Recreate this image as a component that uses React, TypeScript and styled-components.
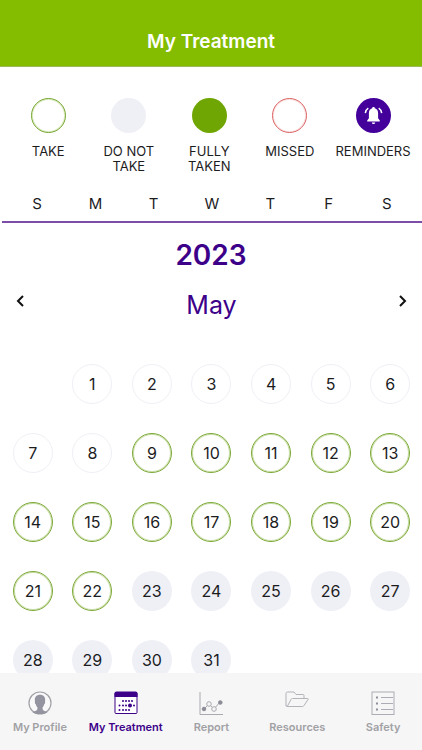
import React from "react";
import styled, { createGlobalStyle, css } from "styled-components";

const purple = "#3c0089";
const green = "#84bd00";
const mist = "#eff0f6";

const GlobalStyle = createGlobalStyle`
  * { box-sizing: border-box; }
  body { margin: 0; background: #fff; }
  button { font: inherit; color: inherit; background: none; border: 0; padding: 0; cursor: pointer; }
`;

const Screen = styled.div`
  display: flex;
  flex-direction: column;
  height: 100vh;
  overflow: hidden;
  background: #fff;
  color: #1c1c1e;
  font-family: Inter, "Liberation Sans", sans-serif;
`;

const Header = styled.header`
  flex: none;
  padding: 30px 16px 13px;
  background: ${green};
  border-bottom: 1px solid #9cb95c;
  text-align: center;
`;

const Title = styled.h1`
  margin: 0;
  color: #fff;
  font-size: 19px;
  font-weight: 600;
  line-height: 23px;
`;

const Content = styled.main`
  flex: 1;
  min-height: 0;
  overflow-y: auto;
  scrollbar-width: none;
`;

const Legend = styled.ul`
  display: grid;
  grid-template-columns: repeat(4, 15fr) 16fr;
  margin: 0;
  padding: 31px 6px 0 8px;
  list-style: none;
`;

const LegendItem = styled.li`
  display: flex;
  flex-direction: column;
  align-items: center;
  gap: 11px;
  height: 93px;
  font-size: 13px;
  line-height: 15px;
  text-align: center;
`;

type SwatchKind = "take" | "skip" | "taken" | "missed" | "reminder";

const swatchStyles = {
  take: css`border: 1px solid #74a52c; box-shadow: inset 0 0 0 1px #dcebc2;`,
  skip: css`background: ${mist};`,
  taken: css`background: #70a603;`,
  missed: css`border: 1px solid #dc6263; box-shadow: inset 0 0 0 1px #fae3e3;`,
  reminder: css`background: #43009a;`,
};

const Swatch = styled.span<{ $kind: SwatchKind }>`
  display: grid;
  place-items: center;
  width: 35px;
  height: 35px;
  border-radius: 50%;
  ${({ $kind }) => swatchStyles[$kind]}
`;

const LegendLabel = styled.span`
  max-width: 80px;
  white-space: pre-line;
`;

const Weekdays = styled.div`
  display: grid;
  grid-template-columns: repeat(7, 1fr);
  margin-left: 2px;
  padding: 3px 6px 7px;
  border-bottom: 2px solid #7c4ea8;
  font-size: 15px;
  line-height: 20px;
  text-align: center;
`;

const Year = styled.h2`
  margin: 0;
  padding-top: 15px;
  color: ${purple};
  font-size: 28px;
  font-weight: 600;
  line-height: 34px;
  text-align: center;
`;

const MonthBar = styled.div`
  display: flex;
  align-items: center;
  justify-content: space-between;
  padding: 16px 5px 0 6px;
`;

const Month = styled.h3`
  margin: 0;
  color: ${purple};
  font-size: 25px;
  font-weight: 400;
  line-height: 34px;
`;

const ArrowButton = styled.button`
  display: grid;
  place-items: center;
  width: 28px;
  height: 26px;
  margin-bottom: 8px;
`;

const Days = styled.div`
  display: grid;
  grid-template-columns: repeat(7, 1fr);
  row-gap: 29px;
  justify-items: center;
  padding: 42px 2px 16px 3px;
`;

type DayKind = "plain" | "take" | "skip";

const dayStyles = {
  plain: css`border: 1px solid ${mist};`,
  take: css`border: 1px solid #7ba836; box-shadow: inset 0 0 0 1px #c9dda5;`,
  skip: css`background: ${mist};`,
};

const Day = styled.button<{ $kind: DayKind; $first: boolean }>`
  && {
    width: 40px;
    height: 40px;
    border-radius: 50%;
    font-size: 16px;
    font-weight: 400;
    line-height: 20px;
    ${({ $first }) => $first && css`grid-column-start: 2;`}
    ${({ $kind }) => dayStyles[$kind]}
  }
`;

const TabBar = styled.nav`
  flex: none;
  display: grid;
  grid-template-columns: repeat(5, 1fr);
  margin: 0 -4px 0 -3px;
  padding: 17px 0 15px;
  background: #f6f6f7;
`;

const Tab = styled.a<{ $active?: boolean }>`
  display: flex;
  flex-direction: column;
  align-items: center;
  gap: 3px;
  color: ${({ $active }) => ($active ? purple : "#a1a1a4")};
  font-size: 11px;
  font-weight: 600;
  line-height: 16px;
  text-decoration: none;
  white-space: nowrap;
`;

const Icon = styled.svg`
  display: block;
  width: 26px;
  height: 26px;
`;

const BellIcon = () => (
  <svg width="21" height="21" viewBox="0 0 21 21" fill="#fff" aria-hidden="true">
    <path d="M10.5 2c-.8 0-1.300.5-1.300 1.200C6.900 3.800 5.900 5.700 5.900 8v5.300L4.200 15.600v.8h12.600v-.8l-1.700-2.300V8c0-2.300-1-4.200-3.300-4.800C11.800 2.500 11.300 2 10.500 2z" />
    <path d="M8.800 17.400h3.400c0 .9-.7 1.500-1.700 1.500s-1.700-.6-1.700-1.500z" />
    <path d="M5.300 3.200C3.500 4.300 2.600 6 2.300 8.200M15.700 3.200c1.800 1.100 2.700 2.800 3 5" fill="none" stroke="#fff" strokeWidth="1.500" />
  </svg>
);

const ProfileIcon = () => (
  <Icon viewBox="0 0 26 26" aria-hidden="true">
    <circle cx="13" cy="13" r="11" fill="#f9f9fa" stroke="#a0a0a7" strokeWidth="1.200" />
    <path d="M13 4.800c-3.300 0-5.400 2.200-5.200 5.400l.2 1.500c-.4.800.1 2.100.8 2.500.3 1.400.9 2.300 1.600 3v2c-.6 1.500-2.800 2-4.900 3A11 11 0 0 0 13 24a11 11 0 0 0 7.500-1.800c-2.100-1-4.300-1.500-4.900-3v-2c.7-.7 1.300-1.600 1.600-3 .7-.4 1.200-1.700.8-2.500l.2-1.500c.2-3.200-1.900-5.400-5.200-5.400z" fill="#93949f" />
  </Icon>
);

const calendarDots = [
  [10, 11], [13, 11], [16, 11], [19, 11],
  [6.5, 15.5], [10, 15.5], [13, 15.5], [21, 15.5],
  [6.5, 20], [10, 20], [13, 20], [16, 20],
];

const CalendarIcon = () => (
  <Icon viewBox="0 0 26 26" fill={purple} aria-hidden="true">
    <rect x="2" y="2.500" width="22" height="21" rx="1" fill="#fff" stroke={purple} />
    <path d="M1.500 3.500q0-2 2-2h19q2 0 2 2V7h-23z" />
    {calendarDots.map(([x, y]) => (
      <circle key={`${x}-${y}`} cx={x} cy={y} r="1" />
    ))}
    <circle cx="17" cy="15.500" r="2" />
  </Icon>
);

const ReportIcon = () => (
  <Icon viewBox="0 0 26 26" fill="none" stroke="#a9a9b0" aria-hidden="true">
    <path d="M2 2v22.500h23" />
    <path d="M6 19l5-5 5 5 6-7" />
    <circle cx="11" cy="14" r="2.300" fill="#f6f6f7" />
    <circle cx="16" cy="19" r="2.300" fill="#f6f6f7" />
    <circle cx="6" cy="19" r="1.800" fill="#8c8c97" stroke="#8c8c97" />
    <circle cx="22.300" cy="12.500" r="1.800" fill="#8c8c97" stroke="#8c8c97" />
  </Icon>
);

const FolderIcon = () => (
  <Icon viewBox="0 0 26 26" fill="none" stroke="#b3b3b9" strokeLinejoin="round" aria-hidden="true">
    <path d="M2 16V3.500q0-1.500 1.500-1.500h6.500l2 2.500h7q1 0 1 1V8.500" />
    <path d="M2 15.500q0 1 1 1h15.500q1 0 1.500-1l4-6q.5-1-.5-1H8.500q-1 0-1.500 1l-3.500 6.500" />
  </Icon>
);

const SafetyIcon = () => (
  <Icon viewBox="0 0 26 26" fill="none" stroke="#acacb4" aria-hidden="true">
    <rect x="2" y="2" width="22" height="22.500" />
    <path d="M11 7.500h12M11 13.500h12M11 19.500h12" />
    <path d="M6 7.500h2M6 13.500h2M6 19.500h2" stroke="#8e8e99" strokeWidth="2" />
  </Icon>
);

const Chevron = ({ d }: { d: string }) => (
  <svg width="10" height="14" viewBox="0 0 10 14" fill="none" stroke="#111" strokeWidth="2" aria-hidden="true">
    <path d={d} />
  </svg>
);

const legend: { kind: SwatchKind; label: string }[] = [
  { kind: "take", label: "TAKE" },
  { kind: "skip", label: "DO NOT\nTAKE" },
  { kind: "taken", label: "FULLY\nTAKEN" },
  { kind: "missed", label: "MISSED" },
  { kind: "reminder", label: "REMINDERS" },
];

const tabs = [
  { label: "My Profile", href: "#profile", Glyph: ProfileIcon },
  { label: "My Treatment", href: "#treatment", Glyph: CalendarIcon },
  { label: "Report", href: "#report", Glyph: ReportIcon },
  { label: "Resources", href: "#resources", Glyph: FolderIcon },
  { label: "Safety", href: "#safety", Glyph: SafetyIcon },
];

const dayKind = (day: number): DayKind => (day < 9 ? "plain" : day < 23 ? "take" : "skip");

export default function App() {
  return (
    <Screen>
      <GlobalStyle />
      <Header>
        <Title>My Treatment</Title>
      </Header>
      <Content>
        <Legend>
          {legend.map(({ kind, label }) => (
            <LegendItem key={kind}>
              <Swatch $kind={kind}>{kind === "reminder" && <BellIcon />}</Swatch>
              <LegendLabel>{label}</LegendLabel>
            </LegendItem>
          ))}
        </Legend>
        <Weekdays>
          {["S", "M", "T", "W", "T", "F", "S"].map((name, index) => (
            <span key={index}>{name}</span>
          ))}
        </Weekdays>
        <Year>2023</Year>
        <MonthBar>
          <ArrowButton type="button" aria-label="Previous month">
            <Chevron d="M8 2L3 7l5 5" />
          </ArrowButton>
          <Month>May</Month>
          <ArrowButton type="button" aria-label="Next month">
            <Chevron d="M2 2l5 5-5 5" />
          </ArrowButton>
        </MonthBar>
        <Days>
          {Array.from({ length: 31 }, (_, index) => index + 1).map((day) => (
            <Day key={day} type="button" $kind={dayKind(day)} $first={day === 1}>
              {day}
            </Day>
          ))}
        </Days>
      </Content>
      <TabBar>
        {tabs.map(({ label, href, Glyph }) => (
          <Tab key={label} href={href} $active={label === "My Treatment"}>
            <Glyph />
            {label}
          </Tab>
        ))}
      </TabBar>
    </Screen>
  );
}
